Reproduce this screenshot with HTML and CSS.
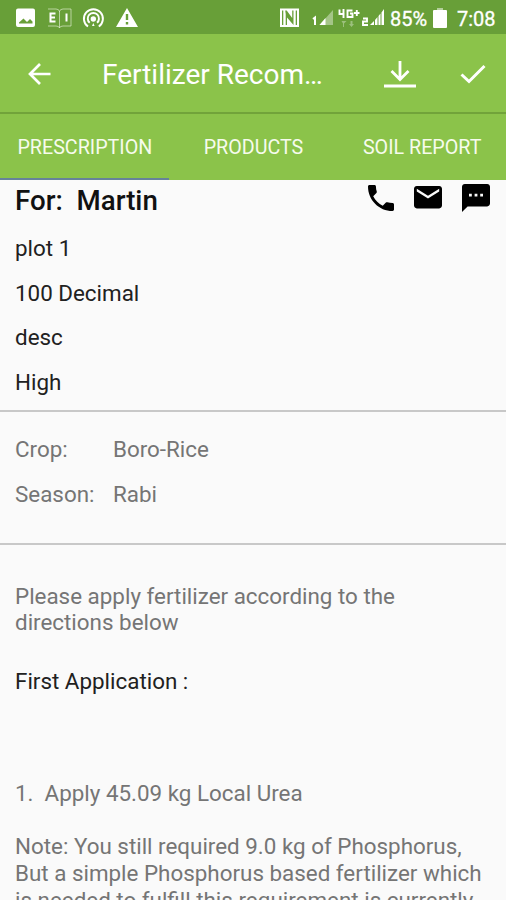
FILE: index.html
```html
<!DOCTYPE html>
<html lang="en">
<head>
<meta charset="utf-8">
<title>Fertilizer Recommendation</title>
<link rel="stylesheet" href="styles.css">
</head>
<body>
<div class="screen">
  <header class="status">
    <svg class="status-left" width="145" height="34" viewBox="0 0 145 34" fill="#fff">
      <path fill-rule="evenodd" d="M18 8.500h15q2 0 2 2v14.500q0 2-2 2h-15q-2 0-2-2v-14.500q0-2 2-2zM19 23.500h13.500v-2l-2.500-2.500-3 3-3.500-3.500-4.500 4z"/>
      <g fill="none" stroke="#e3f0d6" stroke-width="1"><path d="M48 9h8q3 0 3.500 2.500Q60 9 63 9h8v17h-8q-3 0-3.500 2Q59 26 56 26h-8M59.500 11v17" stroke-opacity=".65"/><path d="M55.500 13.500h-5v8h5M50.500 17.500h4.500M66.500 13.500v8" stroke="#fff" stroke-width="2"/></g>
      <g fill="none" stroke="#fff" stroke-width="1.900"><path d="M88 26.500a9.500 9.500 0 1 1 10.800 0M89.700 22.800a5.600 5.600 0 1 1 7.300 0"/></g><circle cx="93.300" cy="19" r="2.700"/><path d="M92 26l1.300-3 1.300 3z"/>
      <path fill-rule="evenodd" d="M127 8l11 19h-22zM125.800 14v6h2.400v-6zM125.800 22v2.500h2.400V22z"/>
    </svg>
    <div class="status-right">
      <svg width="112" height="34" viewBox="276 0 112 34" fill="#fff">
        <path fill-rule="evenodd" d="M280 8.500h19v18.500h-19zM282 10.500v14.500h1.300V10.500zM295.700 10.500v14.500h1.300V10.500zM285.700 14v11h1.300v-7.500l6.500 7.500V10.500h-1.300v7.500l-5.500-7.500h-1.500z"/>
        <path d="M313 19l2-1.500V25" fill="none" stroke="#fff" stroke-width="2"/>
        <path d="M319.500 25L333 10v15z" fill-opacity=".4"/><path d="M319.500 25l6-7v7z"/>
        <g fill="none" stroke="#fff" stroke-width="1.900"><path d="M339.500 9.500v4.500h5M343.500 9v9M352.500 10.500h-5v6.500h5v-3.500h-2.500M354 13h5.500M356.800 10v6"/><path d="M363 18.500h4v3h-4V25h5"/></g>
        <path d="M341.500 21h5l-2.500 2.500V27h-1v-3.500zM350.500 21h2v3h1.500l-2.500 3-2.500-3h1.500z" fill-opacity=".35"/>
        <path d="M370 25l4-4v4zM375 20l2.500-3v8H375zM378.500 16l2-2.500V25h-2zM381.500 12.500L384 9v16h-2.500z"/>
      </svg>
      <span class="percent">85%</span>
      <svg class="battery" width="14" height="20" viewBox="0 0 14 20"><path d="M4 0h6v3H4z" fill="#fff" fill-opacity=".5"/><rect y="2" width="14" height="18" rx="1" fill="#fff"/></svg>
      <span class="clock">7:08</span>
    </div>
  </header>
  <nav class="toolbar">
    <svg width="24" height="24" viewBox="0 0 24 24" fill="none" stroke="#fff" stroke-width="2.700"><path d="M23.500 12H3M13 2L3 12l10 10"/></svg>
    <h1>Fertilizer Recom…</h1>
    <svg class="download" width="32" height="28" viewBox="0 0 32 28" fill="none" stroke="#fff" stroke-width="2.800"><path d="M16 1v18M7.500 11L16 19.500 24.500 11M0 26h32"/></svg>
    <svg class="check" width="26" height="20" viewBox="0 0 26 20" fill="none" stroke="#fff" stroke-width="3"><path d="M1.500 10.500L9 17.500 24.500 2"/></svg>
  </nav>
  <div class="tabs">
    <div class="tab active"><span>PRESCRIPTION</span></div>
    <div class="tab"><span>PRODUCTS</span></div>
    <div class="tab"><span>SOIL REPORT</span></div>
  </div>
  <main>
    <section class="farmer">
      <div class="who">
        <h2>For:&nbsp; Martin</h2>
        <div class="actions">
          <svg width="26" height="26" viewBox="3 3 18 18"><path d="M6.620 10.790c1.440 2.830 3.760 5.140 6.590 6.590l2.200-2.200c.27-.27.67-.36 1.020-.24 1.120.37 2.330.57 3.570.57.55 0 1 .45 1 1V20c0 .55-.45 1-1 1C10.610 21 3 13.390 3 4c0-.55.45-1 1-1h3.500c.55 0 1 .45 1 1 0 1.250.2 2.450.57 3.570.11.35.03.74-.25 1.020z"/></svg>
          <svg width="28" height="22.400" viewBox="2 4 20 16"><path d="M20 4H4c-1.100 0-2 .9-2 2v12c0 1.100.9 2 2 2h16c1.100 0 2-.9 2-2V6c0-1.100-.9-2-2-2zm0 4l-8 5-8-5V6l8 5 8-5z"/></svg>
          <svg width="28" height="28" viewBox="2 2 20 20"><path d="M20 2H4c-1.100 0-2 .9-2 2v18l4-4h14c1.100 0 2-.9 2-2V4c0-1.100-.9-2-2-2zM9 11H7V9h2zm4 0h-2V9h2zm4 0h-2V9h2z"/></svg>
        </div>
      </div>
      <p>plot 1</p>
      <p>100 Decimal</p>
      <p>desc</p>
      <p>High</p>
    </section>
    <dl class="crop">
      <dt>Crop:</dt><dd>Boro-Rice</dd>
      <dt>Season:</dt><dd>Rabi</dd>
    </dl>
    <section class="advice">
      <p>Please apply fertilizer according to the<br>directions below</p>
      <h3>First Application :</h3>
      <p class="step">1.&nbsp; Apply 45.09 kg Local Urea</p>
      <p class="note">Note: You still required 9.0 kg of Phosphorus,<br>But a simple Phosphorus based fertilizer which<br>is needed to fulfill this requirement is currently</p>
    </section>
  </main>
</div>
</body>
</html>
```
FILE: styles.css
```css
* { box-sizing: border-box; }
body, h1, h2, h3, p, dl, dd { margin: 0; }
svg { display: block; flex: none; }
body {
  font-family: Roboto, sans-serif;
  background: #fafafa;
}
.screen {
  width: 506px;
  height: 900px;
  overflow: hidden;
  white-space: nowrap;
}
.status {
  height: 34px;
  background: #689f38;
  color: #fff;
  display: flex;
  align-items: center;
  justify-content: space-between;
  padding-right: 11px;
}
.status-right { display: flex; align-items: center; }
.percent { font-size: 20px; width: 37px; margin-left: 2px; padding-top: 4px; -webkit-text-stroke: 0.3px #fff; }
.battery { margin: 2px 10px 0 6px; }
.clock { font-size: 20px; width: 38px; padding-top: 4px; -webkit-text-stroke: 0.3px #fff; }
.toolbar {
  height: 80px;
  background: #8bc34a;
  border-bottom: 2px solid #71a33a;
  color: #fff;
  display: flex;
  align-items: center;
  padding: 2px 20px 0 27px;
}
.toolbar h1 {
  font-size: 28px;
  font-weight: 400;
  line-height: 36px;
  margin-left: 51px;
  flex: 1;
  padding-top: 2px;
}
.check { margin-left: 44px; }
.tabs {
  height: 66px;
  background: #8bc34a;
  color: #f6fbed;
  display: grid;
  grid-template-columns: repeat(3, 1fr);
  font-size: 19.7px;
  line-height: 67px;
  text-align: center;
}
.tab { height: 66px; padding-left: 1px; }
.tab.active { border-bottom: 2px solid #66839a; }
main { font-size: 22.4px; line-height: 26.6px; color: #757575; }
.farmer {
  height: 232px;
  padding: 0 15px;
  border-bottom: 2px solid #c8c8c8;
  color: #212121;
}
.who {
  height: 46px;
  display: flex;
  justify-content: space-between;
  color: #111;
}
.who h2 { font-size: 27.7px; font-weight: 500; line-height: 32px; padding-top: 5px; }
.actions {
  display: flex;
  gap: 20px;
  height: 35px;
  align-items: center;
  padding-right: 1px;
  color: #000;
}
.farmer p { height: 44.6px; padding-top: 9px; }
.crop {
  height: 133px;
  padding: 24px 15px 0;
  border-bottom: 2px solid #c8c8c8;
  display: grid;
  grid-template-columns: 98px 1fr;
  grid-auto-rows: 44.6px;
}
.advice { padding: 37.500px 15px 0; }
.advice h3 {
  font-size: 22.4px;
  font-weight: 400;
  color: #212121;
  margin-top: 32px;
}
.step { margin-top: 86px; }
.note { margin-top: 26.5px; }
```
